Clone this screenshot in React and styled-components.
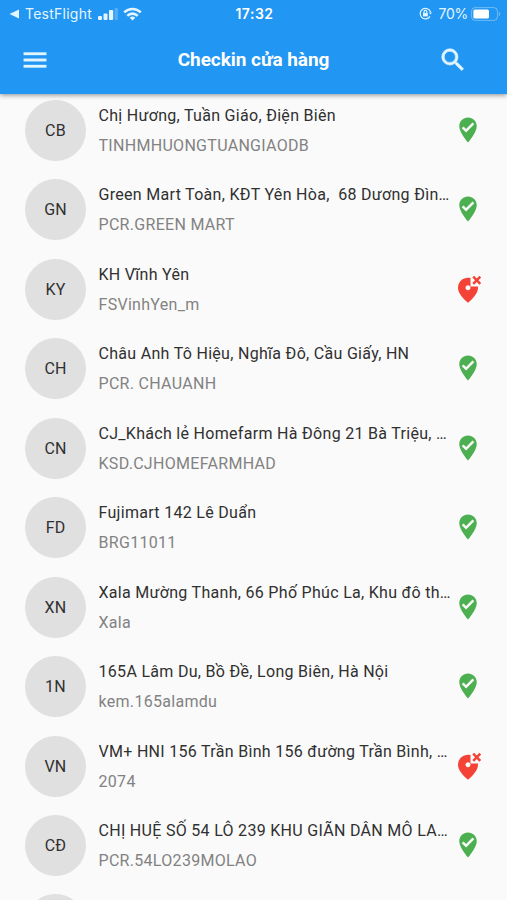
import styled, { createGlobalStyle } from 'styled-components'

const GlobalStyle = createGlobalStyle`
* {
    box-sizing: border-box;
}

body {
    margin: 0;
    height: 900px;
    overflow: hidden;
    background: #fafafa;
    font-family: Roboto, sans-serif;
}
`

const Screen = styled.div`
height: 900px;
display: flex;
flex-direction: column;
overflow: hidden;
`

const Header = styled.header`
flex: none;
height: 94px;
background: #2196f3;
color: white;
box-shadow: 0 1px 5px rgba(0, 0, 0, .45);
z-index: 1;
`

const StatusBar = styled.div`
height: 26px;
padding: 1px 6px 0 9px;
display: grid;
grid-template-columns: 1fr auto 1fr;
align-items: center;
font-family: Inter, sans-serif;
font-size: 14px;
color: #e3f5ff;

svg {
    display: block;
}
`

const StatusGroup = styled.div`
display: flex;
align-items: center;
justify-content: ${({ $end }) => ($end ? 'flex-end' : 'flex-start')};
`

const BackApp = styled.span`
margin: 0 6px 0 6px;
font-size: 14px;
letter-spacing: .25px;
`

const WifiIcon = styled.svg`
margin-left: 4px;
`

const Clock = styled.span`
margin-right: 1px;
font-size: 14px;
font-weight: 600;
letter-spacing: .5px;
color: white;
`

const Percent = styled.span`
margin: 0 3px 0 7px;
font-size: 14px;
letter-spacing: -.3px;
`

const Toolbar = styled.div`
height: 67px;
padding: 0 39px 0 20px;
display: grid;
grid-template-columns: 30px 1fr 30px;
align-items: center;

svg {
    display: block;
}
`

const Title = styled.h1`
margin: 0;
padding-left: 19px;
font-size: 19px;
font-weight: 700;
letter-spacing: -.05px;
text-align: center;
`

const List = styled.ul`
margin: 0;
padding: 0;
list-style: none;
`

const Row = styled.li`
height: 79.45px;
padding: 6px 24px 0 25px;
display: flex;
align-items: flex-start;
`

const Avatar = styled.div`
flex: none;
width: 61px;
height: 61px;
border-radius: 50%;
background: #e0e0e0;
color: #303030;
display: flex;
align-items: center;
justify-content: center;
font-size: 16px;
letter-spacing: .2px;
`

const Info = styled.div`
flex: none;
width: 354px;
margin: 1px 0 0 12.5px;
`

const Name = styled.div`
height: 30px;
line-height: 30px;
font-size: 16px;
letter-spacing: .3px;
color: #303030;
white-space: pre;
overflow: hidden;
text-overflow: ellipsis;
`

const Code = styled(Name)`
color: #828282;
`

const Marker = styled.svg`
flex: none;
display: block;
width: 30px;
height: 30px;
margin: 15px 0 0 .5px;
fill: ${({ $failed }) => ($failed ? '#f44336' : '#4caf50')};
`

const stores = [
  { initials: 'CB', name: 'Chị Hương, Tuần Giáo, Điện Biên', code: 'TINHMHUONGTUANGIAODB' },
  { initials: 'GN', name: 'Green Mart Toàn, KĐT Yên Hòa,  68 Dương Đình Nghệ', code: 'PCR.GREEN MART' },
  { initials: 'KY', name: 'KH Vĩnh Yên', code: 'FSVinhYen_m', failed: true },
  { initials: 'CH', name: 'Châu Anh Tô Hiệu, Nghĩa Đô, Cầu Giấy, HN', code: 'PCR. CHAUANH' },
  { initials: 'CN', name: 'CJ_Khách lẻ Homefarm Hà Đông 21 Bà Triệu, Hà Đông', code: 'KSD.CJHOMEFARMHAD' },
  { initials: 'FD', name: 'Fujimart 142 Lê Duẩn', code: 'BRG11011' },
  { initials: 'XN', name: 'Xala Mường Thanh, 66 Phố Phúc La, Khu đô thị Xala', code: 'Xala' },
  { initials: '1N', name: '165A Lâm Du, Bồ Đề, Long Biên, Hà Nội', code: 'kem.165alamdu' },
  { initials: 'VN', name: 'VM+ HNI 156 Trần Bình 156 đường Trần Bình, Mai Dịch', code: '2074', failed: true },
  { initials: 'CĐ', name: 'CHỊ HUỆ SỐ 54 LÔ 239 KHU GIÃN DÂN MÔ LAO, HÀ ĐÔNG', code: 'PCR.54LO239MOLAO' },
  { initials: '', name: '', code: '' },
]

function StoreMarker({ failed }) {
  if (failed) {
    return (
      <Marker viewBox="0 0 24 24" $failed>
        <path d="M14 10V3.26C13.35 3.09 12.68 3 12 3c-4.2 0-8 3.22-8 8.2 0 3.32 2.67 7.25 8 11.8 5.33-4.55 8-8.48 8-11.8 0-.41-.04-.81-.09-1.2H14zm-2 3c-1.1 0-2-.9-2-2s.9-2 2-2 2 .9 2 2-.9 2-2 2z" />
        <path d="M22.54 2.88l-1.42-1.42L19 3.59l-2.12-2.13-1.42 1.42L17.59 5l-2.13 2.12 1.42 1.42L19 6.41l2.12 2.13 1.42-1.42L20.41 5z" />
      </Marker>
    )
  }
  return (
    <Marker viewBox="0 0 24 24">
      <path d="M12 2C8.14 2 5 5.14 5 9c0 5.25 7 13 7 13s7-7.75 7-13c0-3.86-3.14-7-7-7zm-1.53 12l-3.48-3.48L8.4 9.1l2.07 2.07 5.13-5.14 1.42 1.42L10.47 14z" />
    </Marker>
  )
}

export default function App() {
  return (
    <Screen>
      <GlobalStyle />

      <Header>
        <StatusBar>
          <StatusGroup>
            <svg width="10" height="10" viewBox="0 0 10 10" fill="currentColor">
              <path d="M.5 5L10 .6v8.8z" />
            </svg>
            <BackApp>TestFlight</BackApp>
            <svg width="21" height="12" viewBox="0 0 21 12" fill="currentColor">
              <rect x="0" y="8" width="4" height="4" rx="1" />
              <rect x="5.5" y="5.5" width="4" height="6.5" rx="1" />
              <rect x="11" y="2" width="4.2" height="10" rx="1" />
              <rect x="16.5" y="0" width="3.5" height="12" rx="1" opacity=".25" />
            </svg>
            <WifiIcon width="19" height="14" viewBox="0 0 19 14" fill="none" stroke="currentColor" strokeWidth="2.6">
              <path d="M1.2 5.4a11.8 11.8 0 0 1 16.6 0" />
              <path d="M4.3 8.8a7.4 7.4 0 0 1 10.4 0" />
              <path d="M9.5 13.6L6.7 10.8a4 4 0 0 1 5.6 0z" fill="currentColor" stroke="none" />
            </WifiIcon>
          </StatusGroup>
          <Clock>17:32</Clock>
          <StatusGroup $end>
            <svg width="13" height="13" viewBox="0 0 13 13" fill="none" stroke="currentColor" strokeWidth="1.2">
              <path d="M11.6 5.2A5.3 5.3 0 1 0 11 9.4" />
              <path d="M9.8 5.4h3.2l-1.5 2.2z" fill="currentColor" stroke="none" />
              <rect x="4" y="6" width="4.8" height="3.4" fill="currentColor" stroke="none" />
              <path d="M5 6V4.8a1.4 1.4 0 0 1 2.8 0V6" />
            </svg>
            <Percent>70%</Percent>
            <svg width="30" height="14" viewBox="0 0 30 14">
              <rect x=".6" y=".6" width="25.8" height="12.8" rx="3.6" fill="none" stroke="currentColor" strokeOpacity=".4" />
              <rect x="2.4" y="2.4" width="15.6" height="9.2" rx="1.6" fill="white" />
              <path d="M27.8 4.8c1.8.8 1.8 3.6 0 4.4z" fill="currentColor" opacity=".45" />
            </svg>
          </StatusGroup>
        </StatusBar>

        <Toolbar>
          <svg width="30" height="30" viewBox="0 0 24 24" fill="#e3f5ff" stroke="#e3f5ff" strokeWidth=".3">
            <path d="M3 18h18v-2H3v2zm0-5h18v-2H3v2zm0-7v2h18V6H3z" />
          </svg>
          <Title>Checkin cửa hàng</Title>
          <svg width="30" height="30" viewBox="0 0 24 24" fill="#e3f5ff" stroke="#e3f5ff" strokeWidth=".5">
            <path d="M15.5 14h-.79l-.28-.27A6.471 6.471 0 0 0 16 9.5 6.5 6.5 0 1 0 9.5 16c1.61 0 3.09-.59 4.23-1.57l.27.28v.79l5 4.99L20.49 19l-4.99-5zm-6 0C7.01 14 5 11.99 5 9.5S7.01 5 9.5 5 14 7.01 14 9.5 11.99 14 9.5 14z" />
          </svg>
        </Toolbar>
      </Header>

      <List>
        {stores.map(store => (
          <Row key={store.initials}>
            <Avatar>{store.initials}</Avatar>
            <Info>
              <Name>{store.name}</Name>
              <Code>{store.code}</Code>
            </Info>
            {store.name && <StoreMarker failed={store.failed} />}
          </Row>
        ))}
      </List>
    </Screen>
  )
}
